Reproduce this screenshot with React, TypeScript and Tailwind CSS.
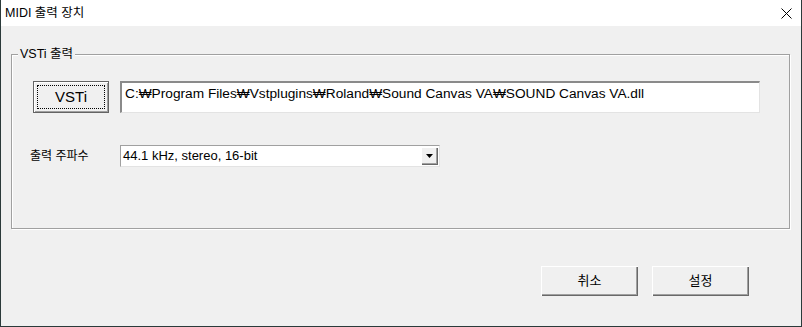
import React from "react";

const font = { fontFamily: '"Liberation Sans", Arial, "Noto Sans CJK KR", sans-serif' };

function Btn({ children, def }: { children: React.ReactNode; def?: boolean }) {
  return (
    <div
      className={
        "relative flex items-center justify-center bg-[#f0f0f0] text-black " +
        (def
          ? "w-[76px] h-[32px] text-[15px] border border-[#646464] shadow-[inset_1px_1px_0_#ffffff,inset_-1px_-1px_0_#a0a0a0]"
          : "w-[97px] h-[30px] text-[13px] shadow-[inset_1px_1px_0_#ffffff,inset_-1px_-1px_0_#696969,inset_-2px_-2px_0_#a0a0a0]")
      }
    >
      {def && (
        <div className="absolute left-[3px] top-[3px] right-[3px] bottom-[3px] border border-dotted border-black" />
      )}
      <span className="relative">{children}</span>
    </div>
  );
}

export default function App() {
  return (
    <div
      className="w-[802px] h-[327px] border-x border-b border-[#2b3a3a] bg-[#f0f0f0] flex flex-col overflow-hidden"
      style={font}
    >
      <div className="h-[26px] bg-white flex items-center justify-between pl-[4px] pr-[9px] shrink-0">
        <span className="text-[12.5px] text-black">MIDI 출력 장치</span>
        <svg width="11" height="11" viewBox="0 0 11 11">
          <path d="M0.5 0.5 L10.5 10.5 M10.5 0.5 L0.5 10.5" stroke="#000" strokeWidth="1" />
        </svg>
      </div>
      <div className="flex flex-col pl-[10px]">
        <div className="relative mt-[28px] w-[779px] h-[175px] border border-[#a0a0a0] shadow-[inset_1px_1px_0_#ffffff,1px_1px_0_#ffffff] flex flex-col pl-[21px] pt-[26px]">
          <span className="absolute left-[6px] top-[-8px] bg-[#f0f0f0] px-[2px] text-[12.5px] leading-[14px] text-black">
            VSTi 출력
          </span>
          <div className="flex items-center gap-[11px]">
            <Btn def>VSTi</Btn>
            <div className="w-[640px] h-[32px] bg-white border-t-2 border-l-2 border-t-[#8a8a8a] border-l-[#8a8a8a] border-r border-b border-r-[#e3e3e3] border-b-[#e3e3e3] flex items-start pl-[3px] pt-[2px] text-[13.7px] leading-[18px] text-black whitespace-nowrap">
              C:₩Program Files₩Vstplugins₩Roland₩Sound Canvas VA₩SOUND Canvas VA.dll
            </div>
          </div>
          <div className="flex items-center mt-[32px] -ml-[3px]">
            <span className="w-[90px] text-[12px] text-black">출력 주파수</span>
            <div className="w-[320px] h-[22px] bg-white border-t border-l border-[#a0a0a0] border-r border-b border-r-[#e3e3e3] border-b-[#e3e3e3] flex items-center justify-between">
              <span className="pl-[2px] text-[13px] leading-[18px] text-black">44.1 kHz, stereo, 16-bit</span>
              <div className="w-[17px] h-[18px] mr-[1px] bg-[#f0f0f0] flex items-center justify-center shadow-[inset_1px_1px_0_#ffffff,inset_-1px_-1px_0_#696969,inset_-2px_-2px_0_#a0a0a0]">
                <svg width="7" height="4" viewBox="0 0 7 4">
                  <path d="M0 0 H7 L3.5 4 Z" fill="#000" />
                </svg>
              </div>
            </div>
          </div>
        </div>
        <div className="flex justify-end gap-[14px] mt-[37px] pr-[52px]">
          <Btn>취소</Btn>
          <Btn>설정</Btn>
        </div>
      </div>
    </div>
  );
}
